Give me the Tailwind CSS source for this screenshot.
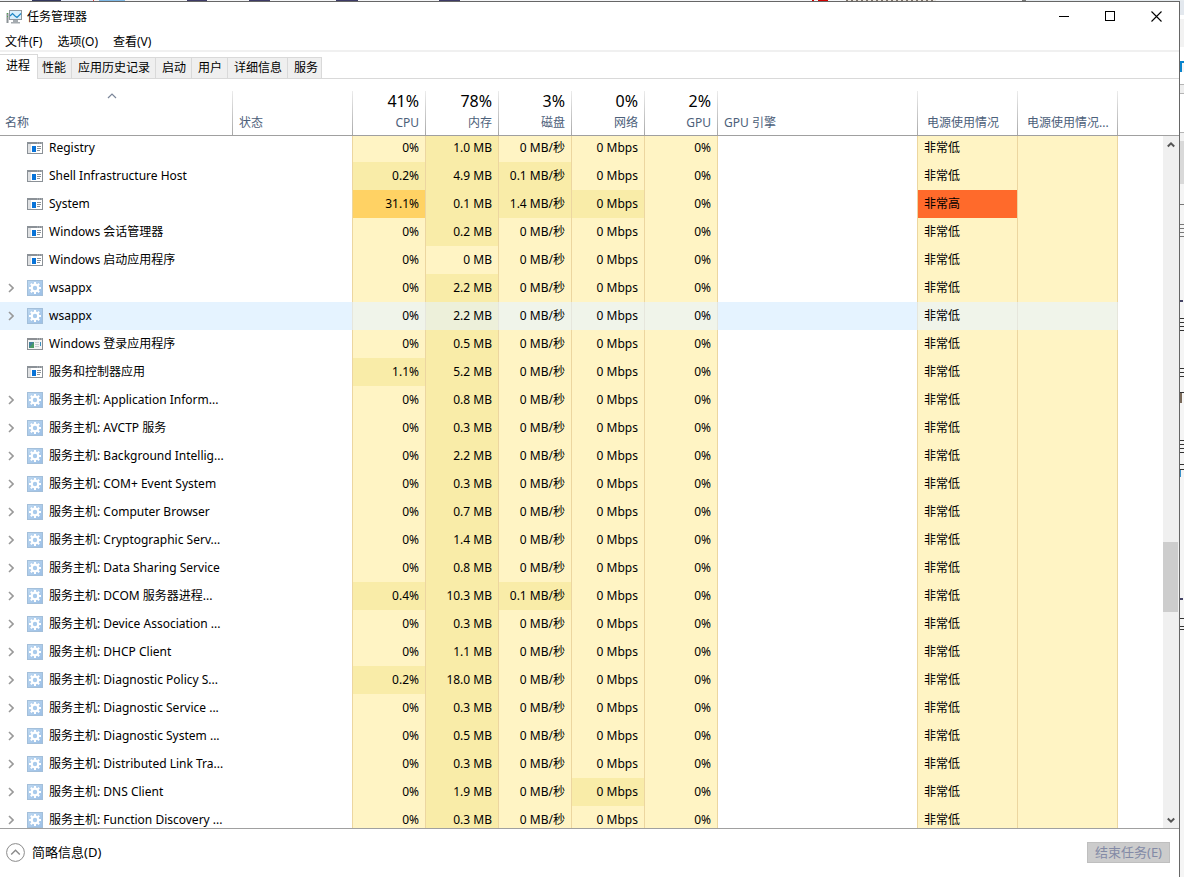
<!DOCTYPE html>
<html lang="zh-CN">
<head>
<meta charset="utf-8">
<title>任务管理器</title>
<script src="https://cdn.jsdelivr.net/npm/@tailwindcss/browser@4"></script>
</head>
<body class="flex h-screen flex-col overflow-hidden bg-white font-['Noto_Sans','Noto_Sans_CJK_SC',sans-serif] text-[12px] leading-4 text-black">

<svg class="absolute h-0 w-0" aria-hidden="true">
  <defs>
    <linearGradient id="gearBg" x1="0" y1="0" x2="1" y2="1">
      <stop offset="0" stop-color="#bdd8f1"/><stop offset="1" stop-color="#9bbfe6"/>
    </linearGradient>
  </defs>
  <symbol id="gear" viewBox="0 0 16 16">
    <rect x=".5" y=".5" width="15" height="15" fill="url(#gearBg)" stroke="#a3bfda"/>
    <path d="M8 2v12M2 8h12M3.800 3.800l8.400 8.400M12.200 3.800l-8.400 8.400" stroke="#fff" stroke-width="2"/>
    <circle cx="8" cy="8" r="3.300" fill="#a9cbec" stroke="#fff" stroke-width="2.200"/>
  </symbol>
  <symbol id="app" viewBox="0 0 16 12">
    <rect width="16" height="12" fill="#8b9197"/>
    <rect x="1" y="2" width="14" height="9" fill="#fff"/>
    <rect x="1" y="2" width="3" height="9" fill="#dfe1e3"/>
    <rect x="5" y="4" width="4" height="6" fill="#0873d8"/>
    <path d="M10 4.500h4M10 6.500h4M10 8.500h3" stroke="#8b9197"/>
    <path d="M10 1h1M12 1h1M14 1h1" stroke="#b9bdc1"/>
  </symbol>
  <symbol id="logon" viewBox="0 0 16 12">
    <rect width="16" height="12" fill="#8b8f94"/>
    <rect x="1" y="2" width="14" height="9" fill="#f4f4f4"/>
    <path d="M10 1h1M12 1h1M14 1h1" stroke="#c4c8cb"/>
    <rect x="2" y="4" width="5" height="6" fill="#44809a"/>
    <path d="M2 10l5-6v6z" fill="#4a9b63"/>
    <path d="M8 4.500h4M8 6.500h4M8 8.500h4" stroke="#c9cccf"/>
    <rect x="13" y="4" width="1" height="4" fill="#3a8fc0"/>
  </symbol>
  <symbol id="chev" viewBox="0 0 6 10">
    <path d="M1 1l4 4-4 4" fill="none" stroke="#999" stroke-width="1.600"/>
  </symbol>
</svg>

<!-- sliver of the desktop above the window -->
<div class="flex h-px shrink-0 bg-[#f4f5f7]" aria-hidden="true">
  <i class="w-[32px] bg-[#f1f3f6]"></i><i class="w-[29px] bg-[#33375e]"></i><i class="w-[32px] bg-[#e8eefc]"></i><i class="w-px bg-[#e04040]"></i>
  <i class="w-[5px]"></i><i class="w-[26px] bg-[#7fb9e6]"></i><i class="w-[62px]"></i><i class="w-[20px] bg-[#3d3a66]"></i>
  <i class="w-[42px]"></i><i class="w-[21px] bg-[#3d3a66]"></i><i class="w-[66px]"></i><i class="w-[22px] bg-[#3d3a66]"></i>
  <i class="w-[81px]"></i><i class="w-[21px] bg-[#3d3a66]"></i><i class="w-[352px]"></i><i class="w-[2px] bg-[#d00000]"></i>
  <i class="w-[4px]"></i><i class="w-[10px] bg-[#d00000]"></i><i class="w-[18px]"></i><i class="w-[90px] bg-[repeating-linear-gradient(90deg,#7d746c_0_2px,#e8e4de_2px_5px)]"></i>
  <i class="w-[86px]"></i><i class="w-[4px] bg-[#777]"></i><i class="grow bg-[#e6ebef]"></i>
</div>

<div class="flex min-h-0 grow">
<main class="flex min-w-0 grow flex-col border-t border-r border-[#666] bg-white">

  <header class="flex h-[29px] shrink-0 items-center">
    <svg class="ml-[6px] h-4 w-4 shrink-0" viewBox="0 0 16 16" aria-hidden="true">
      <path d="M1.500 4v10" stroke="#8c9296" stroke-width="2"/><path d="M1 4.500h1M1 7.500h1" stroke="#4aa84a" stroke-width="1"/>
      <rect x="3.500" y="1.500" width="12" height="9" fill="#d9effb" stroke="#8f979d"/>
      <path d="M4 7l2.500-2.500L9 7l2 1.500L15 4.500" fill="none" stroke="#1c86c4" stroke-width="1.200"/>
      <path d="M7 11h5v2H7zM5 13h9v1.500H5z" fill="#a5abb0"/>
    </svg>
    <h1 class="ml-[5px] grow">任务管理器</h1>
    <button class="flex h-[29px] w-[46px] items-center justify-center" aria-label="最小化"><svg class="h-[11px] w-[11px]" viewBox="0 0 11 11"><path d="M0 5.500h10" stroke="#000"/></svg></button>
    <button class="flex h-[29px] w-[46px] items-center justify-center" aria-label="最大化"><svg class="h-[11px] w-[11px]" viewBox="0 0 11 11"><rect x=".5" y=".5" width="9" height="9" fill="none" stroke="#000"/></svg></button>
    <button class="flex h-[29px] w-[46px] items-center justify-center" aria-label="关闭"><svg class="h-[11px] w-[11px]" viewBox="0 0 11 11"><path d="M.5 .5l10 10M10.500 .5l-10 10" stroke="#000" stroke-width="1.100"/></svg></button>
  </header>

  <nav class="flex h-[21px] shrink-0 items-center gap-[15px] border-b-2 border-[#f0f0f0] pt-[3px] pl-[5px]">
    <button>文件(F)</button><button>选项(O)</button><button>查看(V)</button>
  </nav>

  <div class="flex h-[27px] shrink-0 items-end" role="tablist">
    <button role="tab" aria-selected="true" class="flex h-[25px] items-start border-t border-r border-[#d9d9d9] pt-[3px] pr-[7px] pl-[6px]">进程</button>
    <button role="tab" class="h-[22px] border-t border-r border-b border-[#d9d9d9] bg-[#efefef] pr-[5px] pl-[4px]">性能</button>
    <button role="tab" class="h-[22px] border-t border-r border-b border-[#d9d9d9] bg-[#efefef] pr-[5px] pl-[6px]">应用历史记录</button>
    <button role="tab" class="h-[22px] border-t border-r border-b border-[#d9d9d9] bg-[#efefef] pr-[5px] pl-[6px]">启动</button>
    <button role="tab" class="h-[22px] border-t border-r border-b border-[#d9d9d9] bg-[#efefef] pr-[5px] pl-[6px]">用户</button>
    <button role="tab" class="h-[22px] border-t border-r border-b border-[#d9d9d9] bg-[#efefef] pr-[5px] pl-[6px]">详细信息</button>
    <button role="tab" class="h-[22px] border-t border-r border-b border-[#d9d9d9] bg-[#efefef] pr-[3px] pl-[6px]">服务</button>
    <span class="grow border-b border-[#d9d9d9]"></span>
  </div>

  <div class="flex min-h-0 grow">
    <div class="min-w-0 grow overflow-hidden">
      <table class="w-full table-fixed border-separate border-spacing-0">
        <colgroup>
          <col class="w-[233px]"><col class="w-[120px]"><col class="w-[73px]"><col class="w-[73px]"><col class="w-[73px]"><col class="w-[73px]"><col class="w-[73px]"><col class="w-[200px]"><col class="w-[100px]"><col class="w-[100px]"><col>
        </colgroup>
        <thead><tr id="head" class="h-[57px]"></tr></thead>
        <tbody id="rows"></tbody>
      </table>
    </div>
    <div class="flex w-[16px] shrink-0 flex-col">
      <div class="h-[57px] shrink-0 border-b border-[#a0a0a0]"></div>
      <div class="flex min-h-0 grow flex-col bg-[#f0f0f0]">
        <button class="flex h-[17px] shrink-0 items-center pl-[4px]" aria-label="向上滚动"><svg class="h-2 w-2" viewBox="0 0 8 8"><path d="M.8 5.500L4 2.300l3.200 3.200" fill="none" stroke="#555" stroke-width="2"/></svg></button>
        <div class="grow-[389]"></div>
        <div class="h-[70px] w-[15px] bg-[#cdcdcd]"></div>
        <div class="grow-[199]"></div>
        <button class="flex h-[17px] shrink-0 items-center pl-[4px]" aria-label="向下滚动"><svg class="h-2 w-2" viewBox="0 0 8 8"><path d="M.8 2.500L4 5.700l3.200-3.200" fill="none" stroke="#555" stroke-width="2"/></svg></button>
      </div>
    </div>
  </div>

  <footer class="flex h-[49px] shrink-0 items-center justify-between border-t border-[#a0a0a0] pr-[9px] pb-[2px] pl-[6px] text-[13px]">
    <button class="flex items-center gap-[7px]">
      <svg class="h-[19px] w-[19px]" viewBox="0 0 19 19" fill="none"><circle cx="9.500" cy="9.500" r="8.900" stroke="#8a8a8a"/><path d="M5.200 11.500l4.300-4.300 4.300 4.300" stroke="#8a8a8a" stroke-width="1.400"/></svg>
      <span>简略信息(D)</span>
    </button>
    <button disabled class="h-[21px] w-[83px] border border-[#bfbfbf] bg-[#cccccc] leading-[19px] text-[#838aa6]">结束任务(E)</button>
  </footer>
</main>

<!-- sliver of the page behind the window -->
<aside class="flex w-[4px] shrink-0 flex-col overflow-hidden bg-[#f5f5f5]" aria-hidden="true">
  <i class="h-[14px] shrink-0 bg-[#e3e8ee]"></i><i class="h-[4px] shrink-0 bg-white"></i><i class="h-[28px] shrink-0 bg-[#f2f2f2]"></i>
  <i class="h-[14px] shrink-0 bg-white"></i><i class="h-[2px] shrink-0 bg-[#0a84cc]"></i><i class="h-[9px] w-[2px] shrink-0 bg-[#0a84cc]"></i>
  <i class="h-[12px] shrink-0 bg-white"></i><i class="h-[10px] shrink-0 border-y border-[#b5b5b5] bg-[#eee]"></i>
  <i class="h-[38px] shrink-0 bg-white"></i><i class="h-[9px] shrink-0 border-t border-[#b5b5b5] bg-[#f2f2f2]"></i><i class="h-[43px] shrink-0 bg-[#d9d9d9]"></i>
  <i class="h-[20px] shrink-0"></i><i class="h-px shrink-0 bg-[#777]"></i><i class="h-[19px] shrink-0"></i>
  <i class="h-[13px] shrink-0 bg-[repeating-linear-gradient(#777_0_1px,transparent_1px_4px)]"></i>
  <i class="h-[63px] shrink-0"></i><i class="h-[2px] w-[3px] shrink-0 bg-[#446]"></i><i class="h-[16px] shrink-0"></i>
  <i class="h-[13px] shrink-0 bg-[repeating-linear-gradient(#333_0_1px,transparent_1px_4px)]"></i>
  <i class="h-[37px] shrink-0"></i><i class="h-[12px] shrink-0 bg-[repeating-linear-gradient(#333_0_1px,transparent_1px_4px)]"></i>
  <i class="h-[12px] shrink-0"></i><i class="h-px shrink-0 bg-[#333]"></i><i class="h-[10px] w-[2px] shrink-0 bg-[#7a6a5a]"></i>
  <i class="h-[37px] shrink-0"></i><i class="h-[13px] shrink-0 bg-[repeating-linear-gradient(#333_0_1px,transparent_1px_4px)]"></i>
  <i class="h-[11px] shrink-0"></i><i class="h-[6px] shrink-0 border-y border-[#333]"></i><i class="h-[7px] w-px shrink-0 bg-[#3a90c8]"></i>
  <i class="h-[121px] shrink-0"></i><i class="h-[2px] w-[3px] shrink-0 bg-[#446]"></i><i class="h-[18px] shrink-0"></i>
  <i class="h-[9px] shrink-0 border-y border-[#333]"></i><i class="h-[3px] shrink-0 border-b border-[#333]"></i>
</aside>
</div>

<script>
const headings = [
  ['名称', null, 'pl-[5px] text-left'], ['状态', null, 'pl-[6px] text-left'],
  ['CPU', '41%', 'pr-[7px] text-right'], ['内存', '78%', 'pr-[7px] text-right'], ['磁盘', '3%', 'pr-[7px] text-right'],
  ['网络', '0%', 'pr-[7px] text-right'], ['GPU', '2%', 'pr-[7px] text-right'],
  ['GPU 引擎', null, 'pl-[6px] text-left'], ['电源使用情况', null, 'pl-[9px] text-left'], ['电源使用情况...', null, 'pl-[9px] text-left']
];
const caret = '<svg class="absolute top-[14px] left-[107px] h-[6px] w-[10px]" viewBox="0 0 10 6"><path d="M1 5l4-4 4 4" fill="none" stroke="#7b8699" stroke-width="1.200"/></svg>';
document.getElementById('head').innerHTML = headings.map(([label, total, align], i) =>
  `<th scope="col" class="relative border-b border-[#a0a0a0] bg-[linear-gradient(#ececec,#a8a8a8)] bg-[length:1px_44px] bg-[position:right_bottom] bg-no-repeat p-0 pb-[2px] align-bottom font-normal text-[#4c607a] ${align}">` +
  (i === 0 ? caret : '') +
  (total ? `<div class="text-[16px] leading-6 text-black">${total}</div>` : '') +
  `<div class="leading-5">${label}</div></th>`).join('') +
  '<th class="border-b border-[#a0a0a0] p-0"></th>';

// icon, name, CPU, memory, disk, network
const processes = [
  ['app', 'Registry', '0', '1.0', '0', 0], ['app', 'Shell Infrastructure Host', '0.2', '4.9', '0.1', 0],
  ['app', 'System', '31.1', '0.1', '1.4', 1], ['app', 'Windows 会话管理器', '0', '0.2', '0', 0],
  ['app', 'Windows 启动应用程序', '0', '0', '0', 0], ['gear', 'wsappx', '0', '2.2', '0', 0],
  ['gear', 'wsappx', '0', '2.2', '0', 0], ['logon', 'Windows 登录应用程序', '0', '0.5', '0', 0],
  ['app', '服务和控制器应用', '1.1', '5.2', '0', 0], ['gear', '服务主机: Application Inform...', '0', '0.8', '0', 0],
  ['gear', '服务主机: AVCTP 服务', '0', '0.3', '0', 0], ['gear', '服务主机: Background Intellig...', '0', '2.2', '0', 0],
  ['gear', '服务主机: COM+ Event System', '0', '0.3', '0', 0], ['gear', '服务主机: Computer Browser', '0', '0.7', '0', 0],
  ['gear', '服务主机: Cryptographic Serv...', '0', '1.4', '0', 0], ['gear', '服务主机: Data Sharing Service', '0', '0.8', '0', 0],
  ['gear', '服务主机: DCOM 服务器进程...', '0.4', '10.3', '0.1', 0], ['gear', '服务主机: Device Association ...', '0', '0.3', '0', 0],
  ['gear', '服务主机: DHCP Client', '0', '1.1', '0', 0], ['gear', '服务主机: Diagnostic Policy S...', '0.2', '18.0', '0', 0],
  ['gear', '服务主机: Diagnostic Service ...', '0', '0.3', '0', 0], ['gear', '服务主机: Diagnostic System ...', '0', '0.5', '0', 0],
  ['gear', '服务主机: Distributed Link Tra...', '0', '0.3', '0', 0], ['gear', '服务主机: DNS Client', '0', '1.9', '0', 1],
  ['gear', '服务主机: Function Discovery ...', '0', '0.3', '0', 0]
];
const HOVERED = 6;
document.getElementById('rows').innerHTML = processes.map(([icon, name, cpu, mem, disk, net], i) => {
  const hot = i === HOVERED;
  const low = hot ? 'bg-[#f0f4ea]' : 'bg-[#fff4c4]', mid = hot ? 'bg-[#edf0da]' : 'bg-[#f9eca8]';
  const plain = hot ? 'bg-[#e5f3ff]' : '';
  const edge = hot ? 'border-r border-[#e6e6dc]' : 'border-r border-[#ecd6a0]';
  const shade = v => v === '31.1' ? 'bg-[#ffd264]' : Number(v) ? mid : low;
  const num = (v, unit) => `<td class="p-0 pr-[6px] text-right whitespace-nowrap ${edge} ${shade(v)}">${v}${unit}</td>`;
  const size = icon === 'gear' ? 'h-4 w-4' : 'h-3 w-4';
  const power = i === 2
    ? `<td class="bg-[#ff6a2b] p-0 pl-[6px] ${edge}">非常高</td>`
    : `<td class="p-0 pl-[6px] ${edge} ${low}">非常低</td>`;
  return `<tr class="${i === 0 ? 'h-[26px] align-top leading-[24px]' : 'h-[28px]'}">` +
    `<td class="p-0 ${plain}"><div class="flex items-center whitespace-nowrap"><span class="flex w-[27px] shrink-0 pl-[8px]">` +
    (icon === 'gear' ? '<svg class="h-[10px] w-[6px]"><use href="#chev"/></svg>' : '') +
    `</span><svg class="mr-[6px] shrink-0 ${size}"><use href="#${icon}"/></svg>${name}</div></td>` +
    `<td class="p-0 ${plain} ${edge}"></td>` +
    num(cpu, '%') + num(mem, ' MB') + num(disk, ' MB/秒') +
    `<td class="p-0 pr-[6px] text-right ${edge} ${net ? mid : low}">0 Mbps</td>` + num('0', '%') +
    `<td class="p-0 ${plain} ${edge}"></td>${power}<td class="p-0 ${edge} ${low}"></td><td class="p-0"></td></tr>`;
}).join('');
</script>
</body>
</html>
